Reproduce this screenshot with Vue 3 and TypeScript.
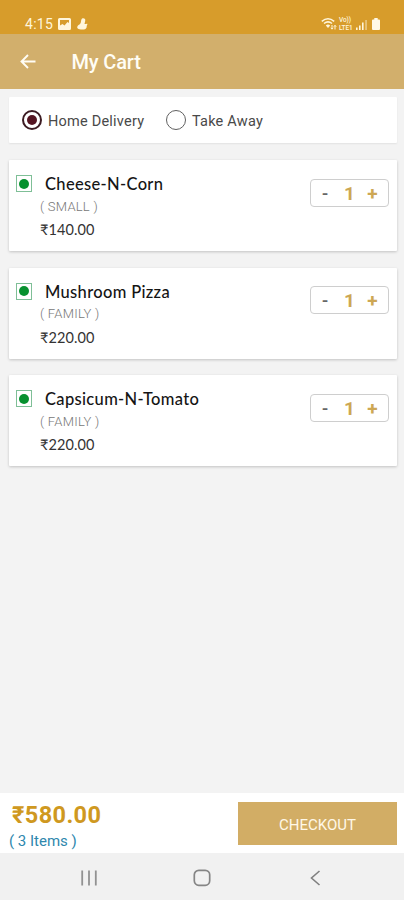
<script setup lang="ts">
import { computed, ref } from 'vue'

interface CartItem {
  name: string
  size: string
  price: number
  quantity: number
}

const delivery = ref<'home' | 'away'>('home')
const items = ref<CartItem[]>([
  { name: 'Cheese-N-Corn', size: 'SMALL', price: 140, quantity: 1 },
  { name: 'Mushroom Pizza', size: 'FAMILY', price: 220, quantity: 1 },
  { name: 'Capsicum-N-Tomato', size: 'FAMILY', price: 220, quantity: 1 },
])
const total = computed(() => items.value.reduce((sum, i) => sum + i.price * i.quantity, 0))

function change(item: CartItem, step: number) {
  item.quantity = Math.max(1, item.quantity + step)
}
</script>

<template>
  <div class="screen">
    <div class="status">
      <span class="clock">4:15</span>
      <svg class="gallery" width="13" height="12" viewBox="0 0 13 12">
        <path fill="#fff6dc" fill-rule="evenodd" d="M1.5 0h10A1.5 1.5 0 0 1 13 1.500v9a1.500 1.500 0 0 1-1.500 1.500h-10A1.500 1.500 0 0 1 0 10.500v-9A1.500 1.500 0 0 1 1.500 0zM2 2v5.500l2.500-1.500 2 1.500L9.500 4 11 5V2z" />
      </svg>
      <svg class="app-mark" width="11" height="12" viewBox="0 0 11 12">
        <path fill="#fff6dc" d="M5.500 .3C7.500 0 8.700 1 8.200 3L7.500 6c1 .2 2-.6 2.800-.2.5 1-.8 1.600-.6 2.600.1 1.400-1 2.800-3 3.100-2.300.3-4.500 0-6.200-1.300C0 9.500.2 8.500 1 7.500 2.500 6.500 3.300 6 3.800 4.500 4.200 3 4 1 5.500 .3z" />
      </svg>
      <svg class="wifi" width="16" height="14" viewBox="0 0 16 14" fill="none" stroke="#fff6dc" stroke-width="1.500">
        <path d="M.8 4.300Q7 -.8 13.200 4.300M3 6.500Q7 3.200 11 6.500" />
        <path d="M4.800 8.500Q7 6.600 9.200 8.500L7 11z" fill="#fff6dc" stroke="none" />
        <path d="M11 8v4M9.800 10.800l1.200 1.400 1.200-1.400M14 12.500V8.500M12.800 9.700L14 8.300l1.200 1.400" stroke-width="1" />
      </svg>
      <span class="volte"><span>Vo))</span><span>LTE1</span></span>
      <svg class="signal" width="12" height="11" viewBox="0 0 12 11" fill="#fff6dc">
        <path d="M0 8.500h1.600V11H0zM3 6.500h1.600V11H3zM6 3.500h1.600V11H6z" />
        <path d="M9.300 1h1.500v10H9.300z" opacity=".55" />
      </svg>
      <svg class="battery" width="8" height="12" viewBox="0 0 8 12">
        <path fill="#fff9e8" d="M2.300 0h3.400v1.500H7a1 1 0 0 1 1 1V11a1 1 0 0 1-1 1H1a1 1 0 0 1-1-1V2.500a1 1 0 0 1 1-1h1.300z" />
      </svg>
    </div>

    <header class="bar">
      <svg class="back" width="16" height="15" viewBox="0 0 16 15" fill="none" stroke="#fffdf5" stroke-width="1.900">
        <path d="M15.500 7.500H1.600M8 1L1.500 7.500 8 14" />
      </svg>
      <h1>My Cart</h1>
    </header>

    <main>
      <section class="card modes">
        <button class="mode home" @click="delivery = 'home'">
          <span class="radio" :class="{ on: delivery === 'home' }"></span><span class="mode-text">Home Delivery</span>
        </button>
        <button class="mode away" @click="delivery = 'away'">
          <span class="radio" :class="{ on: delivery === 'away' }"></span><span class="mode-text">Take Away</span>
        </button>
      </section>

      <section v-for="item in items" :key="item.name" class="card item">
        <span class="veg"></span>
        <div class="info">
          <h2>{{ item.name }}</h2>
          <p class="size">( {{ item.size }} )</p>
          <p class="price">₹{{ item.price.toFixed(2) }}</p>
        </div>
        <div class="stepper">
          <button class="minus" @click="change(item, -1)">-</button>
          <span class="count">{{ item.quantity }}</span>
          <button class="plus" @click="change(item, 1)">+</button>
        </div>
      </section>
    </main>

    <footer class="summary">
      <div>
        <p class="total">₹{{ total.toFixed(2) }}</p>
        <p class="number">( {{ items.length }} Items )</p>
      </div>
      <button class="checkout">CHECKOUT</button>
    </footer>

    <nav class="system">
      <svg width="16" height="16" viewBox="0 0 16 16" stroke="#929292" stroke-width="1.800"><path d="M1.200 .5v15M8 .5v15M14.800 .5v15" /></svg>
      <svg width="18" height="18" viewBox="0 0 18 18" fill="none" stroke="#858585" stroke-width="1.700"><rect x="1.300" y="1.300" width="15.400" height="15" rx="4.500" /></svg>
      <svg width="16" height="16" viewBox="0 0 16 16" fill="none" stroke="#808080" stroke-width="1.600"><path d="M12.500 1L4.500 8l8 7" /></svg>
    </nav>
  </div>
</template>

<style>
body {
  background: #f3f3f3;
}
</style>

<style scoped>
.screen {
  width: 404px;
  height: 900px;
  display: flex;
  flex-direction: column;
  background: #f3f3f3;
  font-family: Roboto, 'Noto Sans', sans-serif;
  overflow: hidden;
}
h1, h2, p {
  margin: 0;
  font-weight: 400;
  white-space: nowrap;
}
button {
  border: 0;
  padding: 0;
  background: none;
  font: inherit;
  color: inherit;
}
.status {
  height: 34px;
  flex: none;
  box-sizing: border-box;
  padding: 14px 24px 0 25px;
  display: flex;
  align-items: center;
  background: #d79c2b;
  color: #fff6dc;
}
.clock {
  width: 33px;
  font-size: 14px;
  line-height: 20px;
  letter-spacing: 0.3px;
}
.app-mark {
  margin-left: 6px;
}
.wifi {
  margin-left: auto;
}
.volte {
  width: 16px;
  margin: 0 1px 0 2px;
  display: flex;
  flex-direction: column;
  font-size: 6.5px;
  line-height: 8px;
  font-weight: 500;
  letter-spacing: -0.1px;
}
.battery {
  margin-left: 4px;
}
.bar {
  height: 55px;
  flex: none;
  display: flex;
  align-items: center;
  padding-left: 20px;
  background: #d2af6c;
  color: #fffdf5;
}
h1 {
  margin: 1px 0 0 35.500px;
  font-size: 20px;
  line-height: 24px;
  font-weight: 500;
  letter-spacing: -0.15px;
}
main {
  flex: 1;
  padding: 8px 7px 0 9px;
}
.card {
  background: #fff;
  border-radius: 1px;
  box-shadow: 0 1px 3px rgba(0, 0, 0, 0.2);
}
.modes {
  height: 46px;
  margin-bottom: 17px;
  display: flex;
  align-items: center;
  color: #494949;
  font-size: 14.5px;
  box-shadow: 0 1px 2px rgba(0, 0, 0, 0.07);
}
.mode {
  display: flex;
  align-items: center;
}
.home {
  width: 144px;
  margin-left: 13px;
}
.mode-text {
  margin: 3px 0 0 6px;
  letter-spacing: 0.22px;
}
.radio {
  width: 20px;
  height: 20px;
  box-sizing: border-box;
  border: 1.5px solid #606060;
  border-radius: 50%;
  display: grid;
  place-items: center;
}
.radio.on {
  border: 2px solid #3c1b22;
}
.radio.on::after {
  content: '';
  width: 10px;
  height: 10px;
  border-radius: 50%;
  background: #551522;
}
.item {
  height: 91px;
  margin-bottom: 16.700px;
  display: flex;
  align-items: flex-start;
}
.veg {
  width: 16px;
  height: 17px;
  box-sizing: border-box;
  margin: 15px 0 0 7px;
  border: 1px solid #7fbf97;
  display: grid;
  place-items: center;
}
.veg::after {
  content: '';
  width: 10px;
  height: 10px;
  border-radius: 50%;
  background: #07912f;
}
.info {
  flex: 1;
  padding: 14px 0 0 8px;
}
h2 {
  margin-left: 5px;
  font: 500 16.5px/21px Lato, sans-serif;
  letter-spacing: 0.33px;
  color: #151515;
}
.size {
  margin-top: 2.500px;
  font-size: 13px;
  line-height: 18px;
  font-weight: 300;
  letter-spacing: 0.25px;
  color: #777;
}
.price {
  margin-top: 4.500px;
  font: 400 14.5px/20px Lato, 'Noto Sans', sans-serif;
  letter-spacing: 0.1px;
  color: #333;
}
.stepper {
  width: 79px;
  height: 28px;
  margin: 18.500px 8px 0 0;
  box-sizing: border-box;
  border: 1px solid #cecece;
  border-radius: 4px;
  display: grid;
  grid-template-columns: 28px 21px 28px;
  align-items: center;
  text-align: center;
  color: #cda754;
  line-height: 24px;
}
.minus {
  font-size: 18px;
  font-weight: 500;
  color: #666;
  padding-top: 2px;
}
.count {
  font-size: 19px;
  font-weight: 700;
  padding-top: 2px;
}
.plus {
  font-size: 19px;
  font-weight: 700;
  padding: 2px 3px 0 0;
}
.summary {
  height: 60px;
  flex: none;
  box-sizing: border-box;
  padding: 9px 7px 0 9px;
  display: flex;
  justify-content: space-between;
  background: #fff;
}
.total {
  margin: 1px 0 0 3px;
  font-size: 23.500px;
  line-height: 25px;
  letter-spacing: 0.4px;
  font-weight: 700;
  color: #cf9820;
}
.number {
  margin-top: 4px;
  font-size: 15px;
  line-height: 18px;
  color: #2e87ad;
}
.checkout {
  width: 159px;
  height: 43px;
  padding-top: 2px;
  background: #d2ad65;
  color: #fff8e8;
  font-size: 15px;
}
.system {
  height: 47px;
  flex: none;
  display: flex;
  align-items: center;
  justify-content: space-between;
  padding: 3px 81px 0 81px;
  box-sizing: border-box;
  background: #f1f1f1;
}
</style>
